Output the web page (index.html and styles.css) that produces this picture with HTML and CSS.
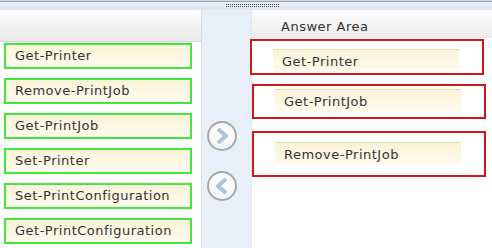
FILE: index.html
```html
<!DOCTYPE html>
<html lang="en">

<head>
    <meta charset="UTF-8">
    <meta name="viewport" content="width=device-width, initial-scale=1.0">
    <title>Answer Area</title>
    <link rel="stylesheet" href="styles.css">
</head>

<body>
    <div class="topbar">
        <div class="grip"></div>
    </div>

    <div class="board">
        <div class="panel source">
            <div class="panel-head"></div>
            <div class="items">
                <div class="item picked">Get-Printer</div>
                <div class="item picked">Remove-PrintJob</div>
                <div class="item picked">Get-PrintJob</div>
                <div class="item picked">Set-Printer</div>
                <div class="item picked">Set-PrintConfiguration</div>
                <div class="item picked">Get-PrintConfiguration</div>
            </div>
        </div>

        <div class="mover">
            <button class="move-btn" title="Move right">
                <svg width="14" height="16" viewBox="0 0 14 16">
                    <path d="M3 1 L11 8 L3 15" fill="none" stroke="#a9c4dc" stroke-width="4" stroke-linejoin="round" />
                </svg>
            </button>
            <button class="move-btn" title="Move left">
                <svg width="14" height="16" viewBox="0 0 14 16">
                    <path d="M11 1 L3 8 L11 15" fill="none" stroke="#a9c4dc" stroke-width="4" stroke-linejoin="round" />
                </svg>
            </button>
        </div>

        <div class="panel target">
            <div class="panel-head">Answer Area</div>
            <div class="slots">
                <div class="slot first">
                    <div class="item">Get-Printer</div>
                </div>
                <div class="slot">
                    <div class="item">Get-PrintJob</div>
                </div>
                <div class="slot tall">
                    <div class="item">Remove-PrintJob</div>
                </div>
            </div>
        </div>
    </div>
</body>

</html>
```

FILE: styles.css
```css
body {
    margin: 0;
    width: 492px;
    height: 248px;
    overflow: hidden;
    font-family: "DejaVu Sans", Verdana, sans-serif;
    font-size: 13px;
    letter-spacing: 0.5px;
    color: #333;
    background-color: #fff;
}

.topbar {
    height: 10px;
    display: flex;
    justify-content: center;
    align-items: flex-start;
    padding-left: 14px;
    background: linear-gradient(#d4dce6 0 1px, #8ea3bc 1px 2px, #eef2f6 2px, #dde4ec 100%);
}

.grip {
    width: 54px;
    height: 4px;
    margin-top: 4px;
    background-image:
        repeating-linear-gradient(90deg, #3c4759 0 1px, transparent 1px 2px),
        repeating-linear-gradient(90deg, #3c4759 0 1px, transparent 1px 2px);
    background-size: 100% 1px;
    background-position: 0 0, 0 2px;
    background-repeat: no-repeat;
}

.board {
    display: grid;
    grid-template-columns: 201px 51px 1fr;
    height: 238px;
}

.panel-head {
    height: 31px;
    border-bottom: 1px solid #d8d8d8;
    background: linear-gradient(#fdfdfd, #e9e9e9);
}

/* left list */
.items {
    display: flex;
    flex-direction: column;
    gap: 9px;
    padding: 1px 0 0 4px;
}

.item {
    height: 23px;
    line-height: 23px;
    padding-left: 9px;
    background: linear-gradient(#fbf3d8, #fffbee);
    border-top: 1px solid #e8dca8;
    box-sizing: border-box;
}

.item.picked {
    width: 188px;
    height: 26px;
    line-height: 22px;
    border: 2px solid #3ee83e;
}

/* middle column */
.mover {
    display: flex;
    flex-direction: column;
    gap: 20px;
    padding: 111px 0 0 5px;
    background-color: #e9eff8;
    border-left: 1px solid #d5dde8;
    border-right: 1px solid #dfe6f0;
}

.move-btn {
    width: 30px;
    height: 30px;
    padding: 0;
    border: 2px solid #a8a8a8;
    border-radius: 50%;
    background: radial-gradient(circle at 50% 35%, #ffffff, #edf1f5);
    display: flex;
    justify-content: center;
    align-items: center;
    cursor: pointer;
}

/* answer area */
.target .panel-head {
    height: 28px;
    border-bottom: none;
    padding: 9px 0 0 29px;
    box-sizing: border-box;
    background: linear-gradient(#fdfdfd, #ececec);
}

.slots {
    display: flex;
    flex-direction: column;
    padding-top: 1px;
}

.slot {
    width: 234px;
    height: 35px;
    box-sizing: border-box;
    border: 2px solid #d01818;
    padding: 3px 0 0 21px;
}

.slot.first {
    height: 36px;
    margin-left: -2px;
    margin-bottom: 9px;
    padding-top: 8px;
}

.slot.tall {
    height: 46px;
    margin-top: 12px;
    padding-top: 9px;
}

.slot .item {
    width: 186px;
}
```
